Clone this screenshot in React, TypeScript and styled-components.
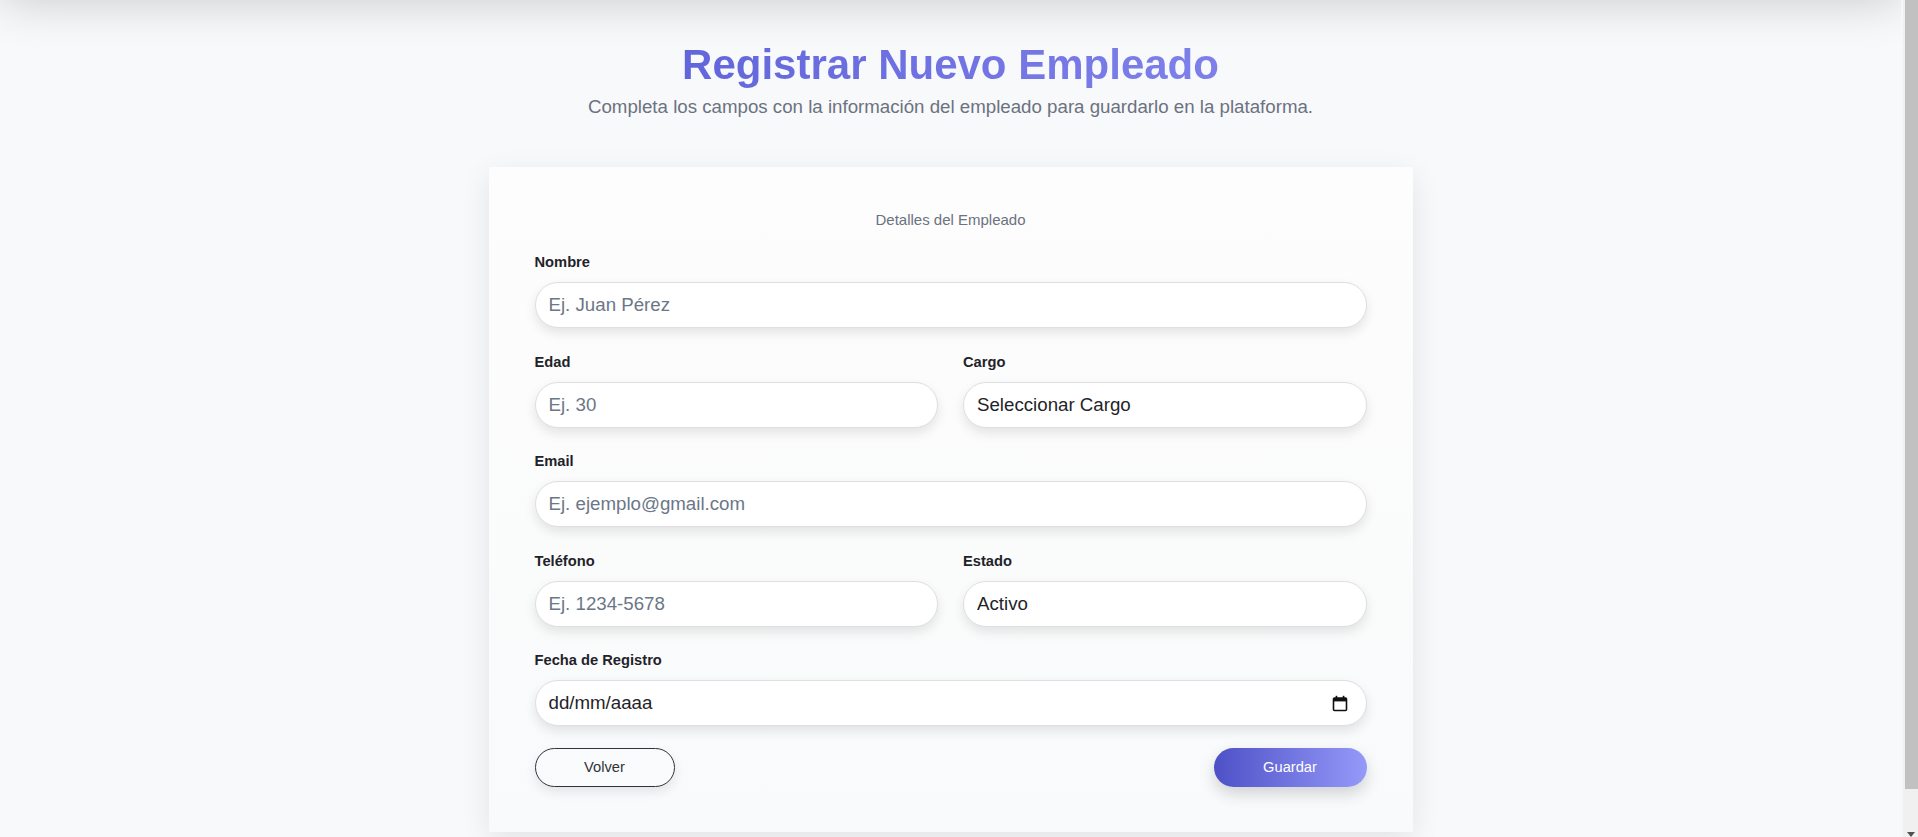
import styled, { createGlobalStyle } from 'styled-components';

const GlobalStyle = createGlobalStyle`
  html, body {
    margin: 0;
    padding: 0;
    background: #f8f9fb;
    font-family: "Liberation Sans", Arial, sans-serif;
  }

  body::-webkit-scrollbar {
    display: none;
  }
`;

const TopShade = styled.div`
  position: fixed;
  top: -80px;
  left: 0;
  right: 17px;
  height: 80px;
  box-shadow: 0 0 50px rgba(0, 0, 0, 0.2);
  z-index: 10;
`;

// fake window scrollbar, sits over the right edge
const ScrollTrack = styled.div`
  position: fixed;
  top: 0;
  right: 0;
  bottom: 0;
  width: 17px;
  background: #f0f0f0;
  border-left: 2px solid #f7f7f7;
  box-sizing: border-box;
  z-index: 20;
`;

const ScrollThumb = styled.div`
  margin-left: 2px;
  height: 789px;
  background: #c1c1c1;
`;

const ScrollArrow = styled.div`
  position: absolute;
  bottom: 0;
  left: 4px;
  width: 0;
  height: 0;
  border-left: 4.5px solid transparent;
  border-right: 4.5px solid transparent;
  border-top: 5px solid #505050;
`;

const Page = styled.main`
  display: flex;
  flex-direction: column;
  align-items: center;
  margin-right: 17px;
  padding: 41px 0 56px;
`;

const Title = styled.h1`
  margin: 0;
  font-size: 42px;
  font-weight: 700;
  background: linear-gradient(90deg, #6366db, #7e80ea);
  -webkit-background-clip: text;
  background-clip: text;
  color: transparent;
`;

const Subtitle = styled.p`
  margin: 7px 0 0;
  font-size: 18.7px;
  color: #6b7280;
`;

const Card = styled.section`
  box-sizing: border-box;
  width: 924px;
  margin-top: 49px;
  padding: 44px 46px 45px;
  background: linear-gradient(180deg, #fdfdfd, #f9fafb);
  border-radius: 2px;
  box-shadow: 0 8px 30px rgba(0, 0, 0, 0.09);
`;

const CardHeading = styled.h2`
  margin: 0 0 26px;
  text-align: center;
  font-size: 15px;
  font-weight: 400;
  color: #6b7280;
`;

const Row = styled.div`
  display: grid;
  grid-template-columns: 1fr 1fr;
  column-gap: 25px;
`;

const Group = styled.div`
  display: flex;
  flex-direction: column;
  margin-bottom: 25.5px;
`;

const Label = styled.label`
  font-size: 14.7px;
  font-weight: 700;
  color: #1f2329;
  margin-bottom: 12px;
`;

const fieldCss = `
  box-sizing: border-box;
  width: 100%;
  height: 46px;
  padding: 0 14px 0 13px;
  border: 1px solid #dfdfe1;
  border-radius: 23px;
  background: #fff;
  box-shadow: 0 5px 12px rgba(0, 0, 0, 0.1);
  font-family: "Liberation Sans", Arial, sans-serif;
  font-size: 18.7px;
  color: #1f2329;
  outline: none;
`;

const Input = styled.input`
  ${fieldCss}
  &::placeholder {
    color: #6b7787;
  }
`;

const Select = styled.select`
  ${fieldCss}
  appearance: none;
  -webkit-appearance: none;
`;

const DateField = styled.div`
  ${fieldCss}
  display: flex;
  align-items: center;
  justify-content: space-between;
  padding-right: 18px;
`;

const DateInput = styled.input`
  flex: 1;
  border: none;
  outline: none;
  background: transparent;
  padding: 0;
  font-family: inherit;
  font-size: 18.7px;
  &::placeholder {
    color: #1f2329;
  }
`;

const Actions = styled.div`
  display: flex;
  justify-content: space-between;
  align-items: center;
  margin-top: -4px;
`;

const Button = styled.button<{ $primary?: boolean }>`
  height: 39px;
  width: ${(p) => (p.$primary ? '153px' : '140px')};
  border-radius: 20px;
  font-family: "Liberation Sans", Arial, sans-serif;
  font-size: 14.7px;
  cursor: pointer;
  border: ${(p) => (p.$primary ? 'none' : '1px solid #2f3338')};
  color: ${(p) => (p.$primary ? '#fff' : '#2f3338')};
  background: ${(p) =>
    p.$primary ? 'linear-gradient(90deg, #4e51c6, #9599f9)' : 'transparent'};
  box-shadow: ${(p) =>
    p.$primary ? '0 7px 16px rgba(0, 0, 0, 0.16)' : '0 5px 12px rgba(0, 0, 0, 0.09)'};
`;

const CalendarIcon = () => (
  <svg width="16" height="17" viewBox="0 0 16 17" aria-hidden="true">
    <rect x="1.5" y="3" width="13" height="12.5" rx="1" fill="none" stroke="#111" strokeWidth="1.6" />
    <rect x="1.5" y="3" width="13" height="3.4" fill="#111" />
    <rect x="3.6" y="0.8" width="1.7" height="3" fill="#111" />
    <rect x="10.7" y="0.8" width="1.7" height="3" fill="#111" />
  </svg>
);

const App = () => (
  <>
    <GlobalStyle />
    <TopShade />
    <ScrollTrack>
      <ScrollThumb />
      <ScrollArrow />
    </ScrollTrack>
    <Page>
      <Title>Registrar Nuevo Empleado</Title>
      <Subtitle>
        Completa los campos con la información del empleado para guardarlo en la plataforma.
      </Subtitle>
      <Card>
        <CardHeading>Detalles del Empleado</CardHeading>
        <form onSubmit={(e) => e.preventDefault()}>
          <Group>
            <Label htmlFor="nombre">Nombre</Label>
            <Input id="nombre" placeholder="Ej. Juan Pérez" />
          </Group>
          <Row>
            <Group>
              <Label htmlFor="edad">Edad</Label>
              <Input id="edad" placeholder="Ej. 30" />
            </Group>
            <Group>
              <Label htmlFor="cargo">Cargo</Label>
              <Select id="cargo" defaultValue="">
                <option value="">Seleccionar Cargo</option>
                <option value="dev">Desarrollador</option>
                <option value="admin">Administrador</option>
              </Select>
            </Group>
          </Row>
          <Group>
            <Label htmlFor="email">Email</Label>
            <Input id="email" placeholder="Ej. ejemplo@gmail.com" />
          </Group>
          <Row>
            <Group>
              <Label htmlFor="telefono">Teléfono</Label>
              <Input id="telefono" placeholder="Ej. 1234-5678" />
            </Group>
            <Group>
              <Label htmlFor="estado">Estado</Label>
              <Select id="estado" defaultValue="activo">
                <option value="activo">Activo</option>
                <option value="inactivo">Inactivo</option>
              </Select>
            </Group>
          </Row>
          <Group>
            <Label htmlFor="fecha">Fecha de Registro</Label>
            <DateField>
              <DateInput id="fecha" placeholder="dd/mm/aaaa" />
              <CalendarIcon />
            </DateField>
          </Group>
          <Actions>
            <Button type="button">Volver</Button>
            <Button type="submit" $primary>
              Guardar
            </Button>
          </Actions>
        </form>
      </Card>
    </Page>
  </>
);

export default App;
